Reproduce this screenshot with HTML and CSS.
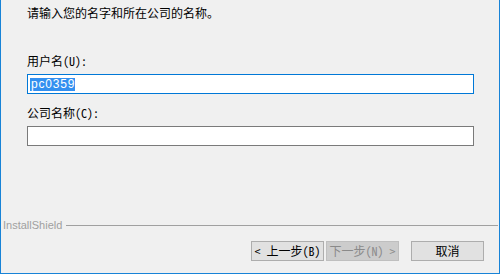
FILE: index.html
```html
<!DOCTYPE html>
<html lang="zh-CN">
<head>
  <meta charset="UTF-8" />
  <title>InstallShield</title>
  <link rel="stylesheet" href="styles.css">
</head>
<body>
  <div class="window">
    <div class="content">
      <p class="intro">请输入您的名字和所在公司的名称。</p>

      <label class="field-label" for="userName">用户名(U):</label>
      <div class="field focused" id="userName"><span class="selected">pc0359</span></div>

      <label class="field-label second" for="company">公司名称(C):</label>
      <div class="field" id="company"></div>
    </div>

    <div class="footer">
      <div class="brand">
        <span class="brand-name">InstallShield</span>
        <span class="brand-line"></span>
      </div>
      <div class="buttons">
        <button class="btn">&lt; 上一步(B)</button>
        <button class="btn" disabled>下一步(N) &gt;</button>
        <button class="btn cancel">取消</button>
      </div>
    </div>
  </div>
</body>
</html>
```

FILE: styles.css
```css
* {
  box-sizing: border-box;
  margin: 0;
  padding: 0;
}

body {
  width: 500px;
  height: 274px;
  background: #f0f0f0;
  font-family: "Noto Sans CJK SC", "Liberation Sans", sans-serif;
  font-size: 12px;
  color: #000;
  overflow: hidden;
}

.window {
  width: 500px;
  height: 274px;
  display: flex;
  flex-direction: column;
  border-left: 1px solid #1883d7;
  border-right: 1px solid #1883d7;
  border-bottom: 1px solid #1883d7;
}

.content {
  padding: 5px 25px 0 26px;
  display: flex;
  flex-direction: column;
}

.intro {
  line-height: 16px;
  height: 16px;
}

.field-label {
  display: block;
  line-height: 16px;
  height: 16px;
  margin-top: 32px;
  font-family: "Noto Sans Mono CJK SC", "Noto Sans CJK SC", monospace;
}

.field-label.second {
  margin-top: 11px;
}

.field {
  margin-top: 5px;
  width: 447px;
  height: 20px;
  background: #fff;
  border: 1px solid #7a7a7a;
  padding: 2px 2px;
  font-family: "Liberation Sans", sans-serif;
  font-size: 12px;
  line-height: 14px;
}

.field.focused {
  border-color: #0078d7;
}

.selected {
  display: inline-block;
  background: #3390f0;
  color: #fff;
  padding: 0 0 0 1px;
  height: 13px;
  line-height: 13px;
  letter-spacing: 0.8px;
}

.footer {
  margin-top: auto;
  padding-bottom: 12px;
}

.brand {
  display: flex;
  align-items: center;
  height: 16px;
  padding-left: 2px;
  padding-right: 1px;
}

.brand-name {
  font-family: "Liberation Sans", sans-serif;
  font-size: 11px;
  color: #a0a0a0;
}

.brand-line {
  flex: 1;
  margin-left: 4px;
  border-top: 1px solid #a0a0a0;
  margin-top: 1px;
}

.buttons {
  display: flex;
  justify-content: flex-end;
  gap: 2px;
  margin-top: 8px;
  padding-right: 15px;
}

.btn {
  width: 73px;
  height: 20px;
  background: #e1e1e1;
  border: 1px solid #adadad;
  font-family: "Noto Sans Mono CJK SC", "Noto Sans CJK SC", monospace;
  font-size: 12px;
  line-height: 16px;
  color: #000;
}

.btn:disabled {
  background: #cccccc;
  border-color: #bfbfbf;
  color: #8a8a8a;
}

.btn.cancel {
  margin-left: 10px;
}
```
